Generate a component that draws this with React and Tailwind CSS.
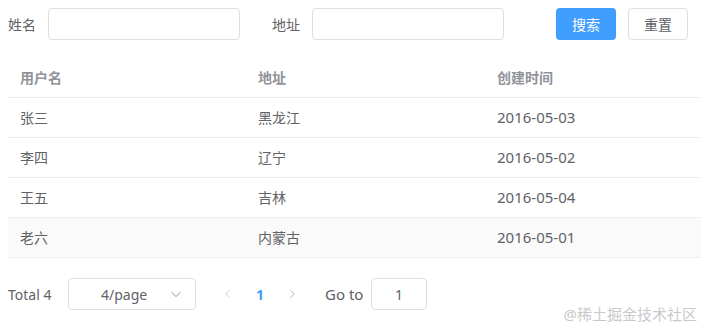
import React from "react";

const rows = [
  { name: "张三", addr: "黑龙江", date: "2016-05-03" },
  { name: "李四", addr: "辽宁", date: "2016-05-02" },
  { name: "王五", addr: "吉林", date: "2016-05-04" },
  { name: "老六", addr: "内蒙古", date: "2016-05-01" },
];

const font = {
  fontFamily: '"Noto Sans", "Noto Sans CJK SC", sans-serif',
};

function Chevron({ dir = "down", className = "" }) {
  const d =
    dir === "down"
      ? "M3 6l5 5 5-5"
      : dir === "left"
      ? "M10 3L5 8l5 5"
      : "M6 3l5 5-5 5";
  return (
    <svg viewBox="0 0 16 16" className={className} fill="none" stroke="currentColor" strokeWidth="1.2">
      <path d={d} />
    </svg>
  );
}

export default function App() {
  return (
    <div className="relative w-[701px] h-[327px] overflow-hidden bg-white text-[14px] text-[#606266]" style={font}>
      {/* search form */}
      <div className="flex items-center pl-2 pt-2 h-10">
        <label className="w-10">姓名</label>
        <input className="w-[192px] h-8 border border-[#dcdfe6] rounded" />
        <label className="ml-8 w-10">地址</label>
        <input className="w-[192px] h-8 border border-[#dcdfe6] rounded" />
        <button className="ml-[52px] w-[60px] h-8 rounded bg-[#409eff] text-white">搜索</button>
        <button className="ml-3 w-[60px] h-8 rounded border border-[#dcdfe6] text-[#606266]">重置</button>
      </div>

      {/* table */}
      <div className="ml-2 mt-[18px]">
        <div className="grid grid-cols-[238px_239px_1fr] h-10 items-center border-b border-[#ebeef5] text-[#909399] font-bold">
          <div className="px-3">用户名</div>
          <div className="px-3">地址</div>
          <div className="px-3">创建时间</div>
        </div>
        {rows.map((r, i) => (
          <div
            key={r.name}
            className={
              "grid grid-cols-[238px_239px_1fr] h-10 items-center border-b border-[#ebeef5] " +
              (i === 3 ? "bg-[#fafafa]" : "")
            }
          >
            <div className="px-3">{r.name}</div>
            <div className="px-3">{r.addr}</div>
            <div className="px-3 text-[15px]">{r.date}</div>
          </div>
        ))}
      </div>

      {/* pagination */}
      <div className="flex items-center pl-2 mt-[20px] h-8">
        <span className="w-[60px]">Total 4</span>
        <div className="relative flex items-center w-32 h-8 border border-[#dcdfe6] rounded">
          <span className="pl-8">4/page</span>
          <Chevron className="absolute right-3 w-3.5 h-3.5 text-[#a8abb2]" />
        </div>
        <Chevron dir="left" className="ml-[26px] w-3 h-3 text-[#c0c4cc]" />
        <span className="ml-5 w-3 text-[#409eff] font-bold text-center">1</span>
        <Chevron dir="right" className="ml-5 w-3 h-3 text-[#a8abb2]" />
        <span className="ml-[27px] w-[46px] text-[15px]">Go to</span>
        <div className="flex items-center justify-center w-14 h-8 border border-[#dcdfe6] rounded">1</div>
      </div>

      <div className="absolute right-1 bottom-0.5 text-[15px] text-[#c8c9cc]">@稀土掘金技术社区</div>
    </div>
  );
}
